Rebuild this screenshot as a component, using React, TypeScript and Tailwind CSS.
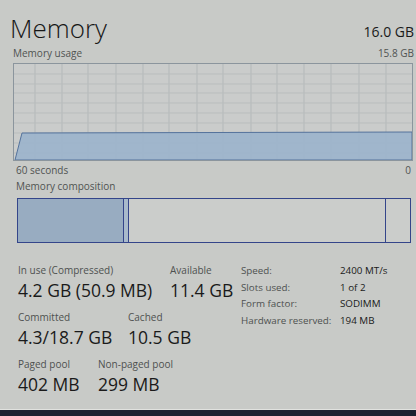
import React from "react"

const vLines = [35, 62, 88, 116, 143, 169, 197, 223, 251, 277, 304, 331, 359, 386]
const hLines = [10, 20, 29, 39, 49, 59, 69, 79, 89]

const stats = [
    [
        { label: "In use (Compressed)", value: "4.2 GB (50.9 MB)", w: "w-[152px]" },
        { label: "Available", value: "11.4 GB", w: "" },
    ],
    [
        { label: "Committed", value: "4.3/18.7 GB", w: "w-[110px]" },
        { label: "Cached", value: "10.5 GB", w: "" },
    ],
    [
        { label: "Paged pool", value: "402 MB", w: "w-[80px]" },
        { label: "Non-paged pool", value: "299 MB", w: "" },
    ],
]

const specs = [
    ["Speed:", "2400 MT/s"],
    ["Slots used:", "1 of 2"],
    ["Form factor:", "SODIMM"],
    ["Hardware reserved:", "194 MB"],
]

function UsageChart() {
    // chart drawing: grid + filled area
    return (
        <svg width="398" height="96" viewBox="0 0 398 96" className="block">
            {vLines.map((x) => (
                <line key={x} x1={x - 14} y1="0" x2={x - 14} y2="96" stroke="#b3b8b9" strokeWidth="1" />
            ))}
            {hLines.map((y) => (
                <line key={y} x1="0" y1={y} x2="398" y2={y} stroke="#b9bdbd" strokeWidth="1" />
            ))}
            <path d="M1 96 L8 69 L398 68 L398 96 Z" fill="#9db4cb" fillOpacity="0.95" stroke="#55739c" strokeWidth="1" />
        </svg>
    )
}

export default function App() {
    return (
        <div
            className="w-[416px] h-[416px] bg-[#c8cac7] flex flex-col overflow-hidden text-[#1c1c1c]"
            style={{ fontFamily: '"Open Sans", "Noto Sans", sans-serif' }}
        >
            {/* Header */}
            <div className="flex justify-between items-end pl-[10px] pr-[2px] pt-[11px]">
                <div className="text-[26px] leading-[34px] font-light text-[#161616]">Memory</div>
                <div className="text-[14px] leading-[20px] mb-[3px] text-[#1a1a1a]">16.0 GB</div>
            </div>

            <div className="flex justify-between items-end pl-[13px] pr-[2px] mt-[2px] text-[10px] leading-[13px] text-[#505352]">
                <span>Memory usage</span>
                <span>15.8 GB</span>
            </div>

            {/* Usage chart */}
            <div className="ml-[13px] mr-[3px] mt-[3px] border border-[#8b959d] bg-[#cacccb]">
                <UsageChart />
            </div>

            <div className="flex justify-between pl-[16px] pr-[5px] mt-[3px] text-[10px] leading-[13px] text-[#505352]">
                <span>60 seconds</span>
                <span>0</span>
            </div>

            <div className="pl-[16px] mt-[3px] text-[10px] leading-[13px] text-[#505352]">Memory composition</div>

            {/* Composition bar */}
            <div className="ml-[17px] mr-[5px] mt-[5px] h-[45px] flex border-[1.5px] border-[#34458a]">
                <div className="w-[106px] bg-[#98acc1] border-r-[1.5px] border-[#34458a]" />
                <div className="w-[5px] bg-[#a9bacb] border-r-[1.5px] border-[#34458a]" />
                <div className="flex-1 bg-[#cbcdcb] border-r-[1.5px] border-[#34458a]" />
                <div className="w-[24px] bg-[#cbcdcb]" />
            </div>

            {/* Stats */}
            <div className="flex pl-[18px] mt-[20px]">
                <div className="w-[223px] flex flex-col gap-[6px]">
                    {stats.map((row, i) => (
                        <div key={i} className="flex">
                            {row.map((s) => (
                                <div key={s.label} className={`${s.w} flex flex-col`}>
                                    <span className="text-[10px] leading-[14px] text-[#4e5150]">{s.label}</span>
                                    <span className="text-[17.5px] leading-[27px] text-[#1a1a1a]">{s.value}</span>
                                </div>
                            ))}
                        </div>
                    ))}
                </div>
                <div className="flex flex-col text-[9.8px] leading-[16.5px]">
                    {specs.map(([k, v]) => (
                        <div key={k} className="flex">
                            <span className="w-[99px] text-[#4e5150]">{k}</span>
                            <span className="text-[#1a1a1a]">{v}</span>
                        </div>
                    ))}
                </div>
            </div>

            {/* Bottom edge */}
            <div className="mt-auto h-[1px] bg-[#e1e2df]" />
            <div className="h-[6px] bg-[#1b2131]" />
        </div>
    )
}
